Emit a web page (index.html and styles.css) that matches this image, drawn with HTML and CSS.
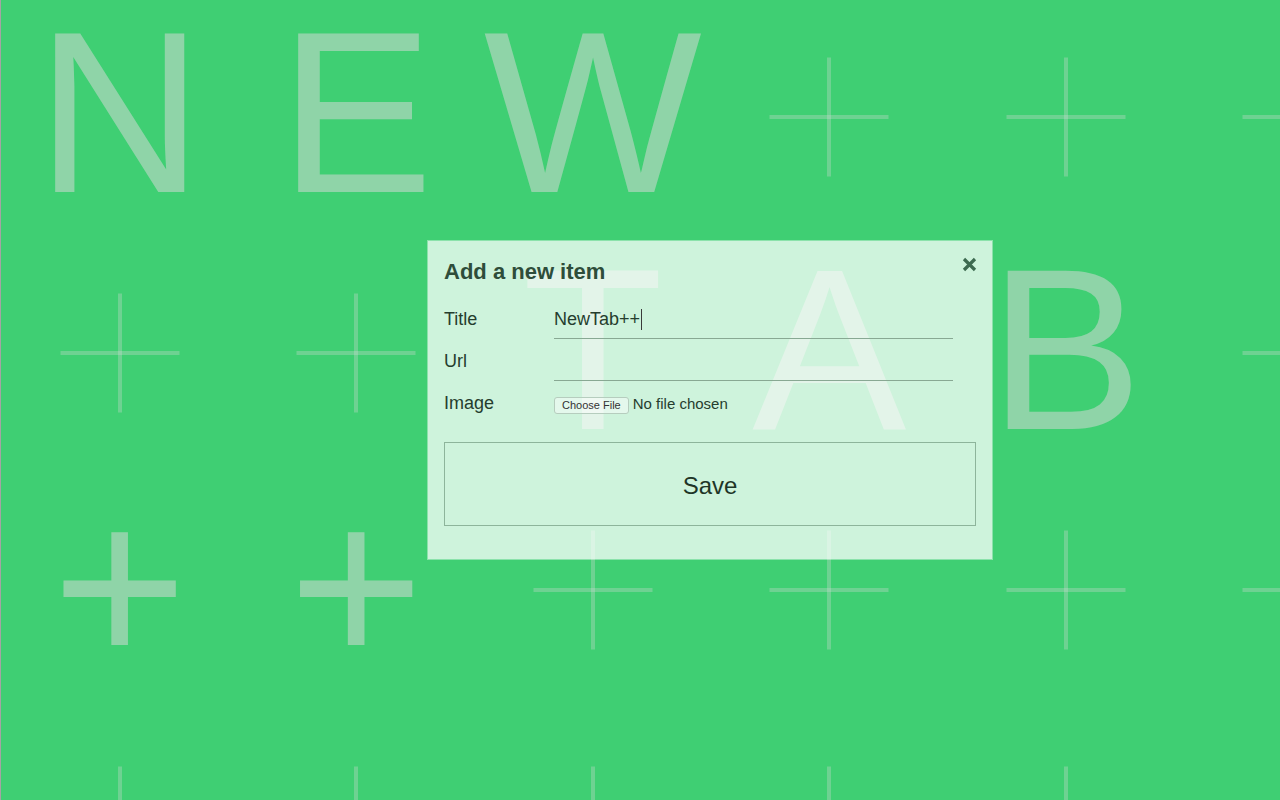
FILE: index.html
```
<!DOCTYPE html>
<html lang="en">
<head>
    <meta charset="UTF-8">
    <meta name="viewport" content="width=device-width, initial-scale=1.0">
    <title>New Tab</title>
    <link rel="stylesheet" href="styles.css">
</head>
<body>
    <div class="tiles">
        <div class="tile">N</div>
        <div class="tile">E</div>
        <div class="tile">W</div>
        <div class="tile tile-empty"></div>
        <div class="tile tile-empty"></div>
        <div class="tile tile-empty"></div>

        <div class="tile tile-empty"></div>
        <div class="tile tile-empty"></div>
        <div class="tile">T</div>
        <div class="tile">A</div>
        <div class="tile">B</div>
        <div class="tile tile-empty"></div>

        <div class="tile">+</div>
        <div class="tile">+</div>
        <div class="tile tile-empty"></div>
        <div class="tile tile-empty"></div>
        <div class="tile tile-empty"></div>
        <div class="tile tile-empty"></div>

        <div class="tile tile-empty"></div>
        <div class="tile tile-empty"></div>
        <div class="tile tile-empty"></div>
        <div class="tile tile-empty"></div>
        <div class="tile tile-empty"></div>
        <div class="tile tile-empty"></div>
    </div>

    <div class="modal">
        <button class="close" aria-label="Close">
            <svg width="15" height="15" viewBox="0 0 15 15">
                <path d="M2 2 L13 13 M13 2 L2 13" stroke="currentColor" stroke-width="3.2" fill="none"/>
            </svg>
        </button>
        <h2 class="modal-title">Add a new item</h2>

        <div class="field">
            <label for="itemTitle">Title</label>
            <div class="input-wrap">
                <input type="text" id="itemTitle" class="text-input" value="NewTab++">
                <span class="caret"></span>
            </div>
        </div>
        <div class="field">
            <label for="itemUrl">Url</label>
            <div class="input-wrap">
                <input type="text" id="itemUrl" class="text-input">
            </div>
        </div>
        <div class="field">
            <label>Image</label>
            <div class="file-picker">
                <span class="file-btn">Choose File</span>
                <span class="file-name">No file chosen</span>
            </div>
        </div>

        <button class="save">Save</button>
    </div>
</body>
</html>
```

FILE: styles.css
```
body {
    margin: 0;
    height: 800px;
    overflow: hidden;
    position: relative;
    background: #3fcf73;
    border-left: 1px solid #a4a4a4;
    font-family: "Liberation Sans", Arial, Helvetica, sans-serif;
}

.tiles {
    display: grid;
    grid-template-columns: repeat(6, 236.5px);
    grid-auto-rows: 236.5px;
    height: 802px;
    overflow: hidden;
    margin-left: 0.5px;
    margin-top: -1.75px;
}

.tile {
    position: relative;
    font-size: 231px;
    line-height: 229.5px;
    text-align: center;
    color: rgba(217, 217, 217, 0.52);
}

.tile-empty::before,
.tile-empty::after {
    content: "";
    position: absolute;
    left: 50%;
    top: 50%;
    background: rgba(217, 217, 217, 0.3);
    transform: translate(-50%, -50%);
}

.tile-empty::before {
    width: 119px;
    height: 4px;
}

.tile-empty::after {
    width: 4px;
    height: 119px;
}

.modal {
    position: absolute;
    left: 426px;
    top: 240px;
    width: 566px;
    box-sizing: border-box;
    padding: 16px 16px 33px 16px;
    background: rgba(255, 255, 255, 0.75);
    background-clip: padding-box;
    border: 1px solid rgba(255, 255, 255, 0.4);
}

.close {
    position: absolute;
    top: 16px;
    right: 15px;
    padding: 0;
    border: none;
    background: none;
    color: #3d6a50;
    cursor: pointer;
    line-height: 0;
}

.modal-title {
    margin: 0 0 20px 0;
    font-size: 22px;
    line-height: 30px;
    font-weight: bold;
    color: #2e4d3a;
}

.field {
    display: flex;
    align-items: baseline;
    margin-bottom: 10px;
}

.field label {
    width: 110px;
    font-size: 18px;
    line-height: 24px;
    color: #253d2e;
}

.input-wrap {
    position: relative;
}

.text-input {
    display: block;
    width: 399px;
    height: 32px;
    box-sizing: border-box;
    padding: 0 0 6px 0;
    border: none;
    border-bottom: 1px solid #88a893;
    background: transparent;
    font-family: inherit;
    font-size: 18px;
    color: #253d2e;
    outline: none;
}

.caret {
    position: absolute;
    left: 87px;
    top: 2px;
    width: 1px;
    height: 21px;
    background: #3a3a3a;
}

.file-picker {
    display: flex;
    align-items: baseline;
    gap: 4px;
}

.file-btn {
    display: inline-block;
    padding: 1px 7px;
    font-size: 11px;
    line-height: 13px;
    color: #333;
    border: 1px solid #b6cdbe;
    border-radius: 3px;
    background: rgba(255, 255, 255, 0.45);
}

.file-name {
    font-size: 15px;
    color: #253d2e;
}

.save {
    display: block;
    width: 100%;
    height: 84px;
    margin-top: 27px;
    padding-top: 4px;
    border: 1px solid #8db49b;
    background: transparent;
    font-family: inherit;
    font-size: 24px;
    color: #1e3527;
    cursor: pointer;
}
```
